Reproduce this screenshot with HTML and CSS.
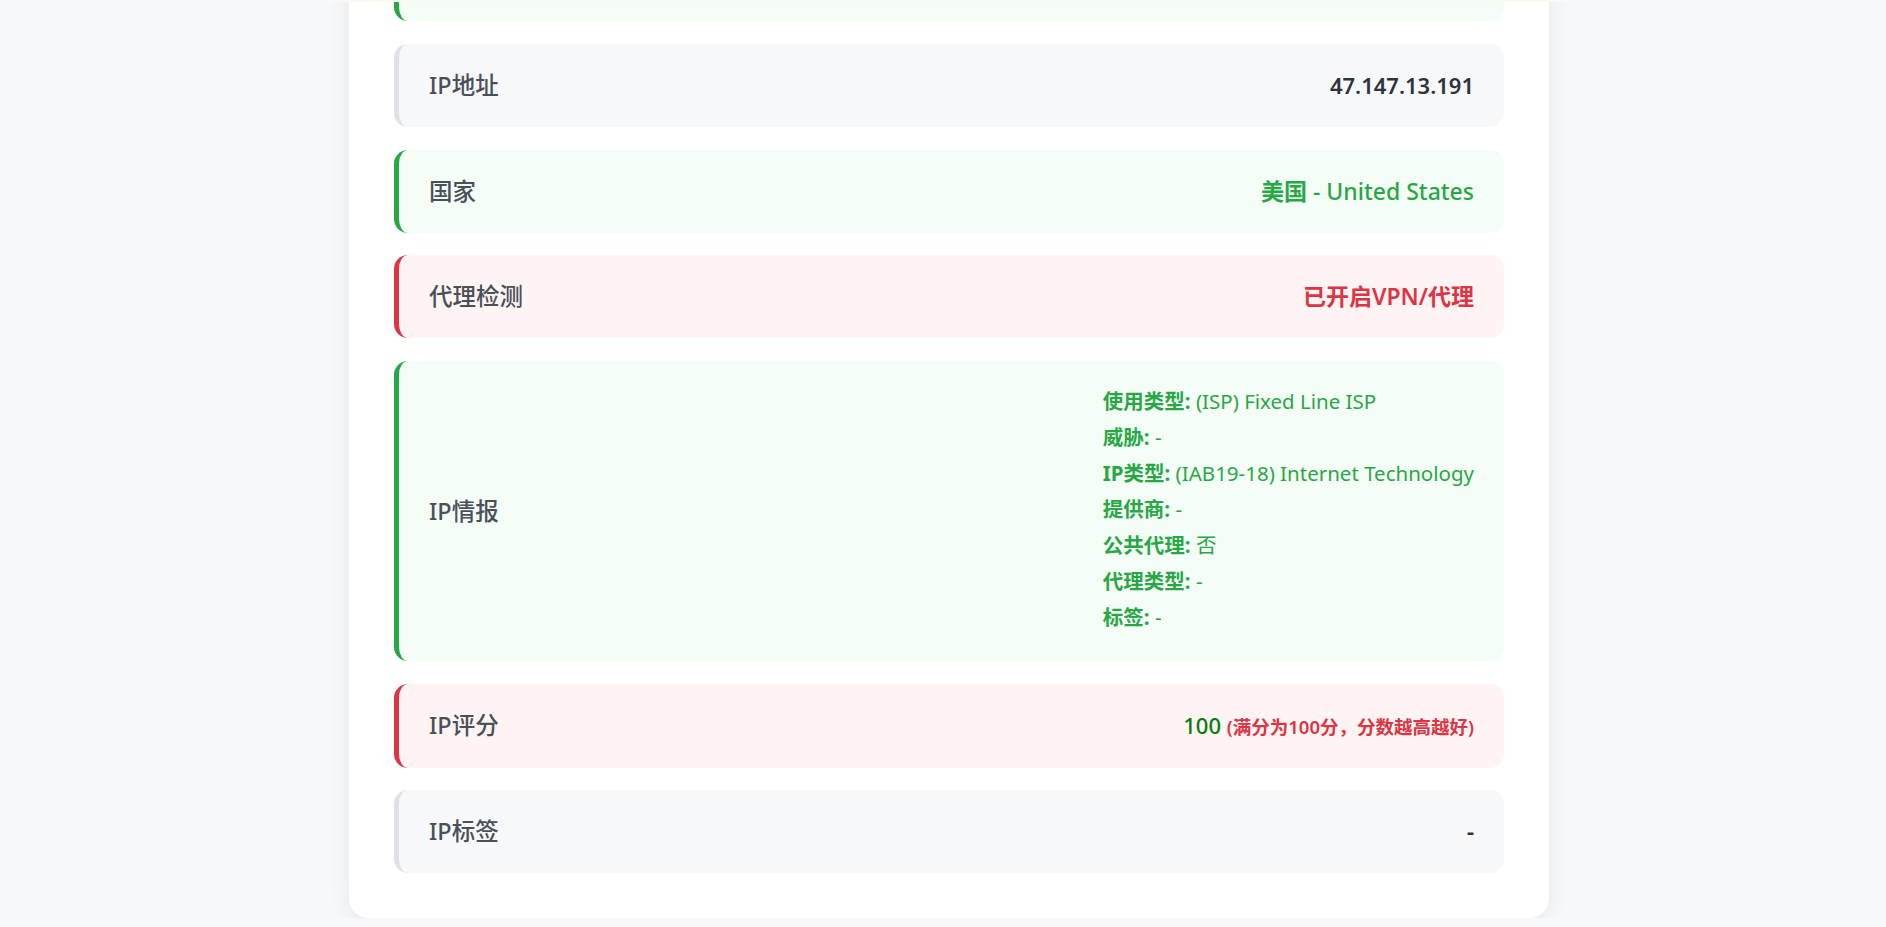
FILE: index.html
```html
<!DOCTYPE html>
<html lang="zh-CN">
  <head>
    <meta charset="utf-8" />
    <title>IP 检测结果</title>
    <link rel="stylesheet" href="styles.css">
  </head>
  <body>
    <div class="topline"></div>

    <main class="card">
      <div class="row ok"></div>

      <div class="row">
        <span class="label">IP地址</span>
        <span class="value ip">47.147.13.191</span>
      </div>

      <div class="row ok">
        <span class="label">国家</span>
        <span class="value"><b>美国</b> <span class="en">- United States</span></span>
      </div>

      <div class="row bad">
        <span class="label">代理检测</span>
        <span class="value">已开启VPN/代理</span>
      </div>

      <div class="row ok">
        <span class="label">IP情报</span>
        <div class="intel">
          <div><b>使用类型:</b> (ISP) Fixed Line ISP</div>
          <div><b>威胁:</b> -</div>
          <div><b>IP类型:</b> (IAB19-18) Internet Technology</div>
          <div><b>提供商:</b> -</div>
          <div><b>公共代理:</b> 否</div>
          <div><b>代理类型:</b> -</div>
          <div><b>标签:</b> -</div>
        </div>
      </div>

      <div class="row bad">
        <span class="label">IP评分</span>
        <span class="score">100 <small>(满分为100分，分数越高越好)</small></span>
      </div>

      <div class="row">
        <span class="label">IP标签</span>
        <span class="value">-</span>
      </div>
    </main>
  </body>
</html>
```

FILE: styles.css
```css
html,
body {
  margin: 0;
  background: #f7f8fa;
  font-family: "Noto Sans", "Noto Sans CJK SC", sans-serif;
  overflow: hidden;
}
body {
  padding-left: 12px;
}
.topline {
  position: fixed;
  top: 0;
  left: 0;
  right: 0;
  height: 2px;
  background: #f9faf2;
}
.card {
  box-sizing: border-box;
  width: 1200px;
  margin: -106.7px auto 0;
  padding: 45px;
  background: #fff;
  border-radius: 20px;
  box-shadow: 0 4px 24px rgba(20, 30, 50, 0.07);
}
.row {
  display: flex;
  justify-content: space-between;
  align-items: center;
  min-height: 35px;
  padding: 24px 30px;
  margin-bottom: 22.7px;
  background: #f7f8fa;
  border-left: 5px solid #dee2e6;
  border-radius: 14px;
}
.row:last-child {
  margin-bottom: 0;
}
.row.ok {
  background: #f5fdf7;
  border-left-color: #28a745;
}
.row.bad {
  background: #fef4f4;
  border-left-color: #dc3545;
}
.label {
  font-size: 23.5px;
  line-height: 35px;
  font-weight: 500;
  color: #4a5058;
}
.value {
  font-size: 23px;
  line-height: 35px;
  font-weight: 600;
  color: #2c3440;
}
.value.ip {
  font-size: 22px;
}
.value b {
  font-weight: 700;
}
.value .en {
  font-weight: 500;
}
.ok .value {
  color: #28a745;
}
.bad .value {
  color: #dc3545;
}
.intel {
  margin: -2.5px 0 2.5px;
  font-size: 20.5px;
  line-height: 36px;
  color: #28a745;
}
.intel b {
  font-weight: 700;
}
.score {
  font-size: 22px;
  line-height: 35px;
  font-weight: 500;
  color: #067d0c;
}
.score small {
  font-size: 18.5px;
  font-weight: 600;
  color: #dc3545;
}
```
